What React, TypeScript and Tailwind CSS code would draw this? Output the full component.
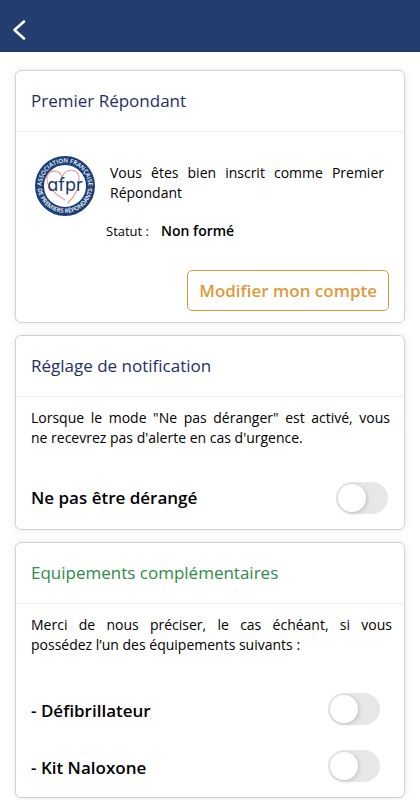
import { useId, useState, type ReactNode } from "react";

function Card({ title, tone, children }: { title: string; tone: string; children: ReactNode }) {
  return (
    <section className="rounded-md border border-[#d2d2d4] bg-white shadow-[0_0_8px_rgba(0,0,0,0.09)]">
      <h2 className={`border-b border-[#f0f0f0] px-[15px] py-[18px] text-[17px] leading-6 font-normal ${tone}`}>
        {title}
      </h2>
      {children}
    </section>
  );
}

function Toggle({ label, inset }: { label: string; inset: string }) {
  const id = useId();
  const [on, setOn] = useState(false);
  return (
    <div className={`flex items-center justify-between pl-[15px] ${inset}`}>
      <label htmlFor={id} className="text-[17px] leading-6 font-semibold text-black">
        {label}
      </label>
      <input
        id={id}
        type="checkbox"
        role="switch"
        checked={on}
        onChange={(e) => setOn(e.target.checked)}
        className="h-8 w-[52px] shrink-0 cursor-pointer appearance-none rounded-full bg-[#e7e7e7] p-0.5 before:block before:size-7 before:rounded-full before:bg-white before:shadow-[1px_1px_4px_rgba(0,0,0,0.18)] before:transition-transform checked:bg-[#233d6e] checked:before:translate-x-5"
      />
    </div>
  );
}

function Logo() {
  return (
    <svg viewBox="0 0 62 62" className="size-[62px] shrink-0" role="img" aria-label="afpr">
      <defs>
        <path id="ring-top" d="M8.5 37 A23.3 23.3 0 1 1 53.5 37" />
        <path id="ring-bottom" d="M3.5 28 A27.6 27.6 0 1 0 58.5 28" />
      </defs>
      <circle cx="31" cy="31" r="25.5" fill="#fff" stroke="#1b3f78" strokeWidth="9" />
      <path
        d="M31 45 C22 40 12 31 13 23 C14 14 25 14 28 22 C32 13 44 13 45 22 C46 32 41 41 34 48"
        fill="none"
        stroke="#e29a9d"
        strokeWidth="1.1"
        strokeLinecap="round"
      />
      <text
        x="31"
        y="36"
        textAnchor="middle"
        className="font-['Inter'] font-normal [font-feature-settings:'cv11']"
        fontSize="18"
        fill="#1b3a70"
      >
        afpr
      </text>
      <g fill="#fff" fontSize="6" fontWeight="600" textAnchor="middle">
        <text>
          <textPath href="#ring-top" startOffset="50%">ASSOCIATION FRANÇAISE</textPath>
        </text>
        <text>
          <textPath href="#ring-bottom" startOffset="50%">DE PREMIERS RÉPONDANTS</textPath>
        </text>
      </g>
      <circle cx="5.4" cy="33" r="0.9" fill="#c9566a" />
      <circle cx="56.6" cy="33" r="0.9" fill="#c9566a" />
    </svg>
  );
}

export default function App() {
  return (
    <div className="min-h-screen bg-white font-['Open_Sans','Noto_Sans',sans-serif] text-black">
      <header className="flex h-[52px] items-center bg-[#233d6e] px-3 pt-2">
        <button type="button" aria-label="Retour" className="flex text-white">
          <svg viewBox="0 0 14 22" className="h-[22px] w-[14px]" fill="none" stroke="currentColor" strokeWidth="2.6" strokeLinecap="round" strokeLinejoin="round">
            <path d="M12 2.5 L2.5 11 L12 19.5" />
          </svg>
        </button>
      </header>

      <main className="flex flex-col gap-3 px-[15px] pt-[18px]">
        <Card title="Premier Répondant" tone="text-[#1f2f66]">
          <div className="flex items-start gap-[14px] pt-[23px] pr-5 pl-[18px]">
            <Logo />
            <p className="pt-2 text-justify text-sm leading-5">
              Vous êtes bien inscrit comme Premier Répondant
            </p>
          </div>
          <p className="flex items-center gap-3 pt-1 pl-[90px] leading-5">
            <span className="text-[13px]">Statut :</span>
            <strong className="text-sm leading-5 font-semibold">Non formé</strong>
          </p>
          <div className="flex justify-end px-[15px] pt-[29px] pb-[11px]">
            <button
              type="button"
              className="h-[41px] rounded-[5px] border border-[#d39a3c] px-[11px] text-[17px] leading-6 font-semibold text-[#e09a3e]"
            >
              Modifier mon compte
            </button>
          </div>
        </Card>

        <Card title="Réglage de notification" tone="text-[#1f2f66]">
          <p className="pt-[11px] pr-[14px] pl-[15px] text-justify text-sm leading-5">
            Lorsque le mode "Ne pas déranger" est activé, vous ne&nbsp;recevrez pas d'alerte en cas d'urgence.
          </p>
          <div className="pt-[34px] pb-[15px]">
            <Toggle label="Ne pas être dérangé" inset="pr-4" />
          </div>
        </Card>

        <Card title="Equipements complémentaires" tone="text-[#2f8a4a]">
          <p className="pt-[11px] pr-3 pl-[15px] text-justify text-sm leading-5">
            Merci de nous préciser, le cas échéant, si vous possédez l’un des équipements suivants :
          </p>
          <div className="flex flex-col gap-[25px] pt-[38px] pb-[15px]">
            <Toggle label="- Défibrillateur" inset="pr-6 *:first:pt-1" />
            <Toggle label="- Kit Naloxone" inset="pr-6 *:first:pt-1" />
          </div>
        </Card>
      </main>
    </div>
  );
}
